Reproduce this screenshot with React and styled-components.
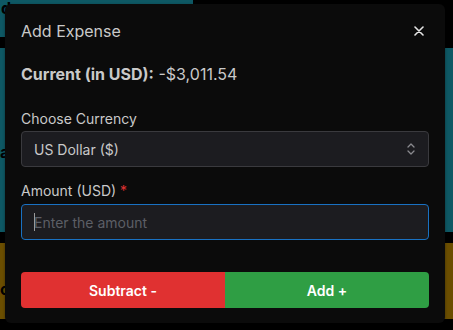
import React from 'react';
import styled, { createGlobalStyle } from 'styled-components';

const GlobalStyle = createGlobalStyle`
  html, body {
    margin: 0;
    padding: 0;
    background: #000;
    font-family: Inter, "Noto Sans", sans-serif;
  }
  * { box-sizing: border-box; }
`;

const Page = styled.div`
  position: relative;
  width: 453px;
  height: 330px;
  overflow: hidden;
  background: #000;
`;

const Backdrop = styled.div`
  display: flex;
  flex-direction: column;
  gap: 11px;
`;

const Block = styled.div`
  width: ${p => p.$width}px;
  height: ${p => p.$height}px;
  background: ${p => p.$color};
  color: #000;
  font-weight: 700;
  font-size: 16px;
  padding: ${p => p.$pad || '0'};
  line-height: 16px;
  overflow: hidden;
`;

const Modal = styled.div`
  position: absolute;
  top: 4px;
  left: 5px;
  width: 440px;
  height: 319px;
  background: #0b0b0b;
  border-radius: 6px;
  box-shadow: 0 1px 3px rgba(0, 0, 0, 0.4);
  display: flex;
  flex-direction: column;
`;

const Header = styled.div`
  height: 54px;
  padding: 0 16px;
  display: flex;
  align-items: center;
  justify-content: space-between;
`;

const Title = styled.h2`
  margin: 0;
  font-size: 16px;
  font-weight: 400;
  color: #c9c9c9;
`;

const CloseButton = styled.button`
  background: none;
  border: none;
  padding: 0;
  width: 16px;
  height: 16px;
  display: flex;
  align-items: center;
  justify-content: center;
  margin-right: 2px;
  color: #e6e6e6;
  cursor: pointer;
`;

const Body = styled.div`
  padding: 4px 16px 15px;
  display: flex;
  flex-direction: column;
`;

const Current = styled.div`
  font-size: 16px;
  line-height: 24px;
  color: #c9c9c9;
  margin-bottom: 23px;

  b { font-weight: 700; }
`;

const Field = styled.div`
  display: flex;
  flex-direction: column;
  gap: 2px;
  margin-bottom: ${p => p.$gap || 0}px;
`;

const Label = styled.label`
  font-size: 14px;
  line-height: 20px;
  color: #c9c9c9;

  span { color: #e03131; margin-left: 4px; }
`;

const SelectBox = styled.div`
  height: 36px;
  border: 1px solid #3a3a3e;
  border-radius: 4px;
  background: #1c1c20;
  padding: 0 12px;
  display: flex;
  align-items: center;
  justify-content: space-between;
  font-size: 14px;
  color: #c9c9c9;
`;

const InputWrap = styled.div`
  position: relative;
  height: 36px;
  margin-top: 1px;
`;

const Input = styled.input`
  width: 100%;
  height: 36px;
  border: 1px solid #1971c2;
  border-radius: 4px;
  background: #1c1c20;
  padding: 0 12px;
  font-family: inherit;
  font-size: 14px;
  color: #c9c9c9;
  outline: none;

  &::placeholder { color: #5c5f66; }
`;

const Caret = styled.span`
  position: absolute;
  left: 13px;
  top: 9px;
  width: 1px;
  height: 18px;
  background: #9a9a9a;
`;

const Actions = styled.div`
  display: flex;
  margin-top: 32px;
`;

const ActionButton = styled.button`
  flex: 1;
  height: 36px;
  border: none;
  background: ${p => p.$color};
  color: #fff;
  font-family: inherit;
  font-size: 14px;
  font-weight: 600;
  border-radius: ${p => (p.$side === 'left' ? '4px 0 0 4px' : '0 4px 4px 0')};
  cursor: pointer;
`;

const Chevrons = () => (
  <svg width="10" height="14" viewBox="0 0 10 14" fill="none" stroke="#8a8a8f" strokeWidth="1.3" strokeLinecap="round" strokeLinejoin="round">
    <path d="M2 5 L5 2 L8 5" />
    <path d="M2 9 L5 12 L8 9" />
  </svg>
);

const CloseIcon = () => (
  <svg width="10" height="10" viewBox="0 0 10 10" stroke="currentColor" strokeWidth="1.6" strokeLinecap="round">
    <path d="M1 1 L9 9 M9 1 L1 9" />
  </svg>
);

export default function App() {
  return (
    <Page>
      <GlobalStyle />
      <Backdrop>
        <Block $width={193} $height={37} $color="#0e5864" $pad="0 0 0 1px">d</Block>
        <Block $width={453} $height={184} $color="#0e5864" $pad="96px 0 0 0">a</Block>
        <Block $width={453} $height={76} $color="#6b4e00" $pad="38px 0 0 0">o</Block>
      </Backdrop>
      <Modal>
        <Header>
          <Title>Add Expense</Title>
          <CloseButton aria-label="Close"><CloseIcon /></CloseButton>
        </Header>
        <Body>
          <Current><b>Current (in USD):</b> -$3,011.54</Current>
          <Field $gap={14}>
            <Label>Choose Currency</Label>
            <SelectBox>
              US Dollar ($)
              <Chevrons />
            </SelectBox>
          </Field>
          <Field>
            <Label>Amount (USD)<span>*</span></Label>
            <InputWrap>
              <Input placeholder="Enter the amount" />
              <Caret />
            </InputWrap>
          </Field>
          <Actions>
            <ActionButton $color="#e03131" $side="left">Subtract -</ActionButton>
            <ActionButton $color="#2f9e44" $side="right">Add +</ActionButton>
          </Actions>
        </Body>
      </Modal>
    </Page>
  );
}
